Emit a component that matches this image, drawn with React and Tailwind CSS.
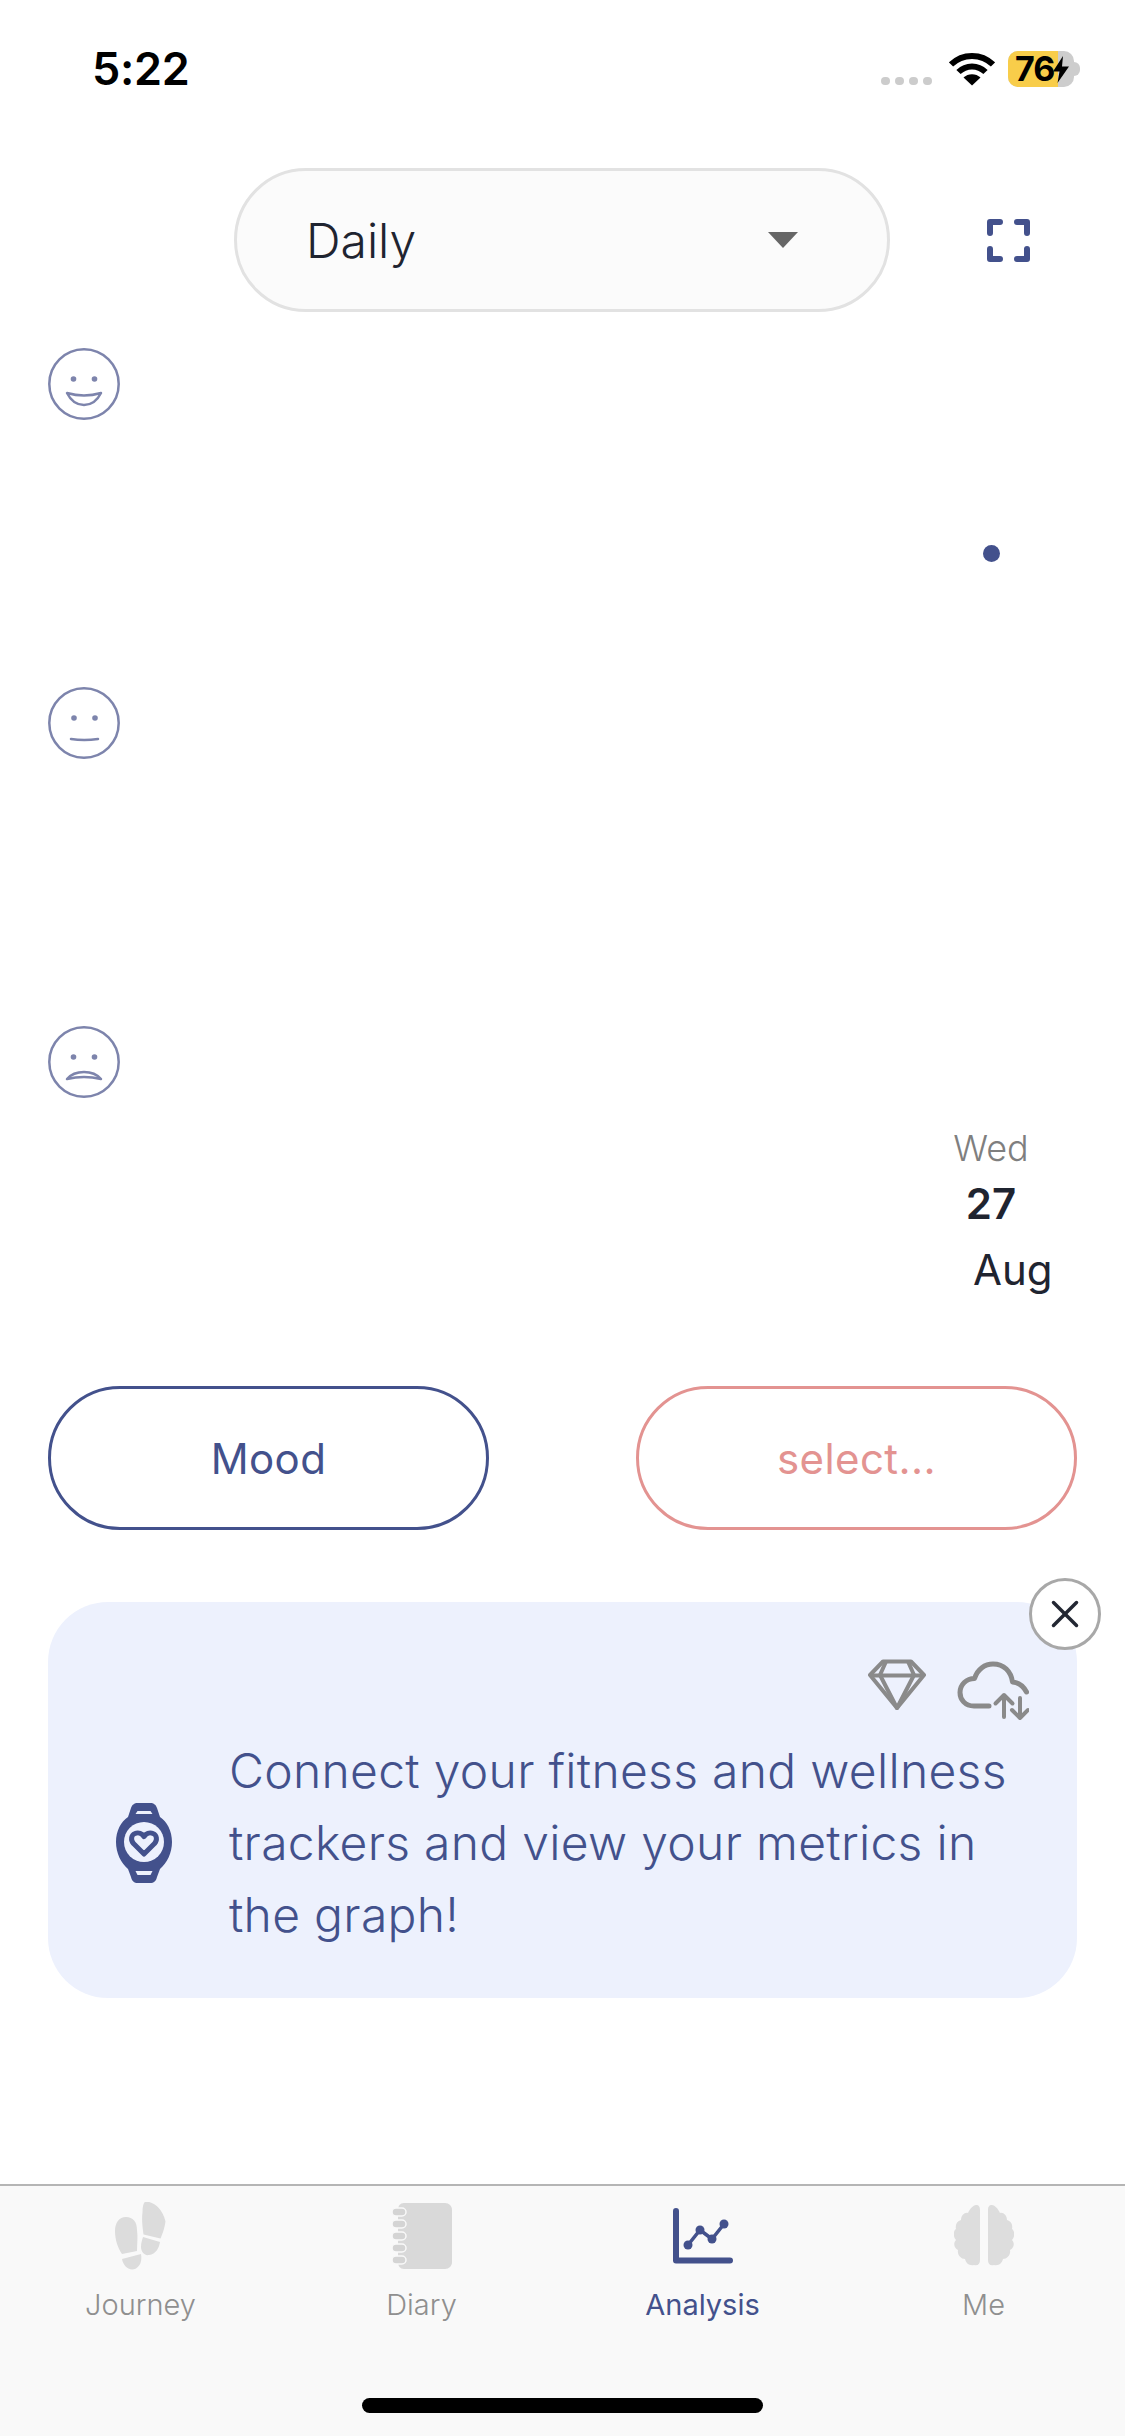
import React from "react";

function Face({ children }) {
  return (
    <svg width="72" height="72" viewBox="0 0 72 72" fill="none" stroke="#7d84ac" strokeWidth="2.5" strokeLinecap="round" strokeLinejoin="round">
      <circle cx="36" cy="36" r="34.7" />
      {children}
    </svg>
  );
}

function Eyes({ y = 31, a = 25.5, b = 46.5 }) {
  return (
    <g fill="#7d84ac" stroke="none">
      <circle cx={a} cy={y} r="2.8" />
      <circle cx={b} cy={y} r="2.8" />
    </g>
  );
}

function Tab({ label, active, icon }) {
  return (
    <div className="flex w-[281px] flex-col items-center">
      <div className="flex h-[72px] w-[90px] items-center justify-center">{icon}</div>
      <div className={active ? "mt-[15px] text-[29px] leading-[36px] text-[#43518c]" : "mt-[15px] text-[29px] font-light leading-[36px] text-[#8f8f8f]"}>{label}</div>
    </div>
  );
}

export default function App() {
  return (
    <div className="flex h-[2436px] w-[1125px] flex-col overflow-hidden bg-white font-['Inter',sans-serif] text-[#1f2430]">
      {/* Status bar */}
      <div className="flex h-[168px] items-start justify-between pl-[92px] pr-[45px] pt-[42px]">
        <div className="text-[45px] font-semibold leading-[54px] tracking-[-0.3px] text-black">5:22</div>
        <div className="flex items-center pt-[9px]">
          <div className="mt-[23px] flex gap-[5px]">
            <span className="h-[8px] w-[9px] rounded-full bg-[#cccccc]" />
            <span className="h-[8px] w-[9px] rounded-full bg-[#cccccc]" />
            <span className="h-[8px] w-[9px] rounded-full bg-[#cccccc]" />
            <span className="h-[8px] w-[9px] rounded-full bg-[#cccccc]" />
          </div>
          <svg className="ml-[17px]" width="46" height="34" viewBox="0 0 46 34" fill="none" stroke="#000" strokeWidth="6">
            <path d="M2 12.500C13.500 1 32.500 1 44 12.500" />
            <path d="M9.500 20C17 12.500 29 12.500 36.500 20" />
            <path d="M23 33.500L14.500 25.500C19 21 27 21 31.500 25.500Z" fill="#000" stroke="none" />
          </svg>
          <div className="relative ml-[13px] h-[36px] w-[66px] rounded-[10px] bg-[#cdcdcd]">
            <div className="h-full w-[50px] rounded-l-[10px] bg-[#f8cd4a]" />
            <div className="absolute left-[7px] top-0 text-[34px] font-bold leading-[36px] tracking-[-1px] text-black">76</div>
            <svg className="absolute left-[45px] top-[5px]" width="16" height="27" viewBox="0 0 16 27">
              <path d="M10 0L0 15.500H6.500L4.500 27L16 10.500H9L10 0Z" fill="#000" />
            </svg>
          </div>
          <div className="h-[14px] w-[6px] rounded-r-full bg-[#cdcdcd]" />
        </div>
      </div>

      {/* Select row */}
      <div className="flex h-[144px] items-center pl-[234px]">
        <div className="flex h-[144px] w-[656px] items-center justify-between rounded-full border-[3px] border-[#e2e2e2] bg-[#fbfbfb] pl-[69px] pr-[89px]">
          <span className="pt-[2px] text-[48px] font-light leading-[58px]">Daily</span>
          <svg width="30" height="16" viewBox="0 0 30 16">
            <path d="M0 0H30L15 16Z" fill="#666666" />
          </svg>
        </div>
        <svg className="ml-[97px]" width="43" height="43" viewBox="0 0 43 43" fill="none" stroke="#43518c" strokeWidth="6" strokeLinecap="round" strokeLinejoin="round">
          <path d="M3 14V3H13" />
          <path d="M30 3H40V14" />
          <path d="M3 30V40H13" />
          <path d="M30 40H40V30" />
        </svg>
      </div>

      {/* Chart */}
      <div className="relative flex flex-col pl-[48px] pt-[36px]">
        <div className="flex flex-col gap-[267px]">
          <Face>
            <Eyes />
            <path d="M19 45Q36 50 53 45Q47 57 36 57Q25 57 19 45Z" />
          </Face>
          <Face>
            <Eyes a={26} b={47} />
            <path d="M23 52Q36 54 50 52" />
          </Face>
          <Face>
            <Eyes />
            <path d="M19 53Q36 49 53 53Q47 46 36 46Q25 46 19 53Z" />
          </Face>
        </div>
        <div className="absolute left-[983px] top-[233px] h-[17px] w-[17px] rounded-full bg-[#43518c]" />
        <div className="ml-[883px] mt-[28px] flex flex-col">
          <div className="w-[120px] text-center text-[36px] font-light leading-[44px] text-[#7f7f7f]">Wed</div>
          <div className="mt-[9px] w-[120px] text-center text-[42px] font-semibold leading-[50px]">27</div>
          <div className="ml-[42px] mt-[16px] text-[42px] leading-[50px]">Aug</div>
        </div>
      </div>

      {/* Buttons */}
      <div className="mt-[91px] flex justify-between px-[48px]">
        <div className="flex h-[144px] w-[441px] items-center justify-center rounded-full border-[3px] border-[#43518c] text-[42px] tracking-[0.4px] text-[#43518c]">Mood</div>
        <div className="flex h-[144px] w-[441px] items-center justify-center rounded-full border-[3px] border-[#e39391] text-[42px] tracking-[0.4px] text-[#e39391]">select...</div>
      </div>

      {/* Card */}
      <div className="relative mx-[48px] mt-[72px] flex h-[396px] flex-col rounded-[60px] bg-[#edf1fd]">
        <div className="absolute right-[-24px] top-[-24px] flex h-[72px] w-[72px] items-center justify-center rounded-full border-[3px] border-[#a8a8a8] bg-white">
          <svg width="28" height="28" viewBox="0 0 28 28" fill="none" stroke="#232733" strokeWidth="3.500" strokeLinecap="round">
            <path d="M2.500 2.500L25.500 25.500" />
            <path d="M25.500 2.500L2.500 25.500" />
          </svg>
        </div>
        <div className="mt-[57px] flex items-start pl-[820px]">
          <svg width="58" height="52" viewBox="0 0 58 52" fill="none" stroke="#8a8a8a" strokeWidth="4" strokeLinejoin="round">
            <path d="M15 2.500H43L56 16L29 49L2 16Z" />
            <path d="M2 16.500H56" />
            <path d="M18 2.500L12 16L29 49L46 16L40 2.500" />
          </svg>
          <svg className="ml-[31px] mt-[2px]" width="72" height="60" viewBox="0 0 72 60" fill="none" stroke="#8a8a8a" strokeWidth="5" strokeLinecap="round" strokeLinejoin="round">
            <path d="M32 45H17C8 45 3 38.500 3 31.500C3 23.500 9.500 17.500 17.500 17.500C20.500 8 28 3 36 3C47 3 54 10.500 55.500 21C61 21.500 66 24.500 69.500 31" />
            <path d="M47 56V34M38.500 42.500L47 34L55.500 42.500" strokeWidth="4" />
            <path d="M63 37V57M55 49L63 57L71 49" strokeWidth="4" />
          </svg>
        </div>
        <div className="mt-[14px] flex items-center pl-[68px]">
          <svg width="56" height="80" viewBox="0 0 56 80" fill="none">
            <path d="M12 14L15 5C16 2 18 0 22 0H34C38 0 40 2 41 5L44 14C51 18.500 56 28 56 39C56 50 51 60 44 66L41 74C40 78 38 80 34 80H22C18 80 16 78 15 74L12 66C5 60 0 50 0 39C0 28 5 18.500 12 14Z" fill="#43518c" />
            <path d="M19.500 11L21.500 8H34.500L36.500 11ZM19.500 68L21.500 72H34.500L36.500 68Z" fill="#edf1fd" />
            <circle cx="28" cy="39" r="20" fill="#edf1fd" />
            <path d="M28 51L17.500 40.500C14.500 37 15 32 19 30.500C22.500 29 26 30.500 28 33.500C30 30.500 33.500 29 37 30.500C41 32 41.500 37 38.500 40.500Z" stroke="#43518c" strokeWidth="5" strokeLinejoin="round" />
          </svg>
          <div className="ml-[57px] w-[810px] text-[48px] font-light leading-[72px] tracking-[0.3px] text-[#43518c]">
            Connect your fitness and wellness trackers and view your metrics in the graph!
          </div>
        </div>
      </div>

      {/* Tab bar */}
      <div className="mt-[186px] flex flex-1 flex-col border-t-[2px] border-[#b5b5b5] bg-[#f9f9f9]">
        <div className="mt-[14px] flex">
          <Tab
            label="Journey"
            icon={
              <svg width="52" height="68" viewBox="0 0 52 68" fill="#dcdcdc">
                <path d="M31 0C39 0 48 7 51 20C50 26 49 30 46 37L29 33C28 25 27 18 28 11C28 5 29 1 31 0Z" transform="translate(-0.500 -0.500)" />
                <path d="M28 35L45 40C44 46 41 52 34 53C29 54 26 49 26 45C26 41 27 38 28 35Z" />
                <path d="M11 15C18 15 22 20 22 28C23 35 22 42 22 49L7 52C3 46 0 38 0 29C0 21 4 15 11 15Z" />
                <path d="M7 57L26 52C27 58 26 64 20 67C13 69 8 63 7 57Z" />
              </svg>
            }
          />
          <Tab
            label="Diary"
            icon={
              <svg width="60" height="66" viewBox="0 0 60 66">
                <path d="M12 0H53C57 0 60 3 60 7V59C60 63 57 66 53 66H12C8 66 6 63 6 59V7C6 3 8 0 12 0Z" fill="#d9d9d9" />
                {[9, 21, 33, 45, 57].map((y) => (
                  <rect key={y} x="0" y={y - 4} width="14" height="8" rx="4" fill="#d4d4d4" stroke="#f9f9f9" strokeWidth="1.500" />
                ))}
              </svg>
            }
          />
          <Tab
            label="Analysis"
            active
            icon={
              <svg width="60" height="56" viewBox="0 0 60 56" fill="none">
                <path d="M3 3V52.500H57" stroke="#43518c" strokeWidth="6" strokeLinecap="round" strokeLinejoin="round" />
                <path d="M15 37L27 22L39 31L51 16" stroke="#43518c" strokeWidth="3.500" />
                <g fill="#43518c">
                  <circle cx="15" cy="37" r="4.500" />
                  <circle cx="27" cy="22" r="4.500" />
                  <circle cx="39" cy="31" r="4.500" />
                  <circle cx="51" cy="16" r="4.500" />
                </g>
              </svg>
            }
          />
          <Tab
            label="Me"
            icon={
              <svg width="60" height="62" viewBox="0 0 60 62" fill="#dddddd">
                <path d="M26 5V55C26 59 24 61 20 60C15 61 12 58 11 54C7 54 3 50 4 45C0 43 -1 38 2 35C-1 32 -1 26 2 24C1 20 3 16 7 15C7 10 11 7 14 8C16 3 20 0 22 0C25 0 26 2 26 5Z" />
                <path d="M34 5V55C34 59 36 61 40 60C45 61 48 58 49 54C53 54 57 50 56 45C60 43 61 38 58 35C61 32 61 26 58 24C59 20 57 16 53 15C53 10 49 7 46 8C44 3 40 0 38 0C35 0 34 2 34 5Z" />
              </svg>
            }
          />
        </div>
        <div className="mx-auto mt-[75px] h-[15px] w-[401px] rounded-full bg-black" />
      </div>
    </div>
  );
}
